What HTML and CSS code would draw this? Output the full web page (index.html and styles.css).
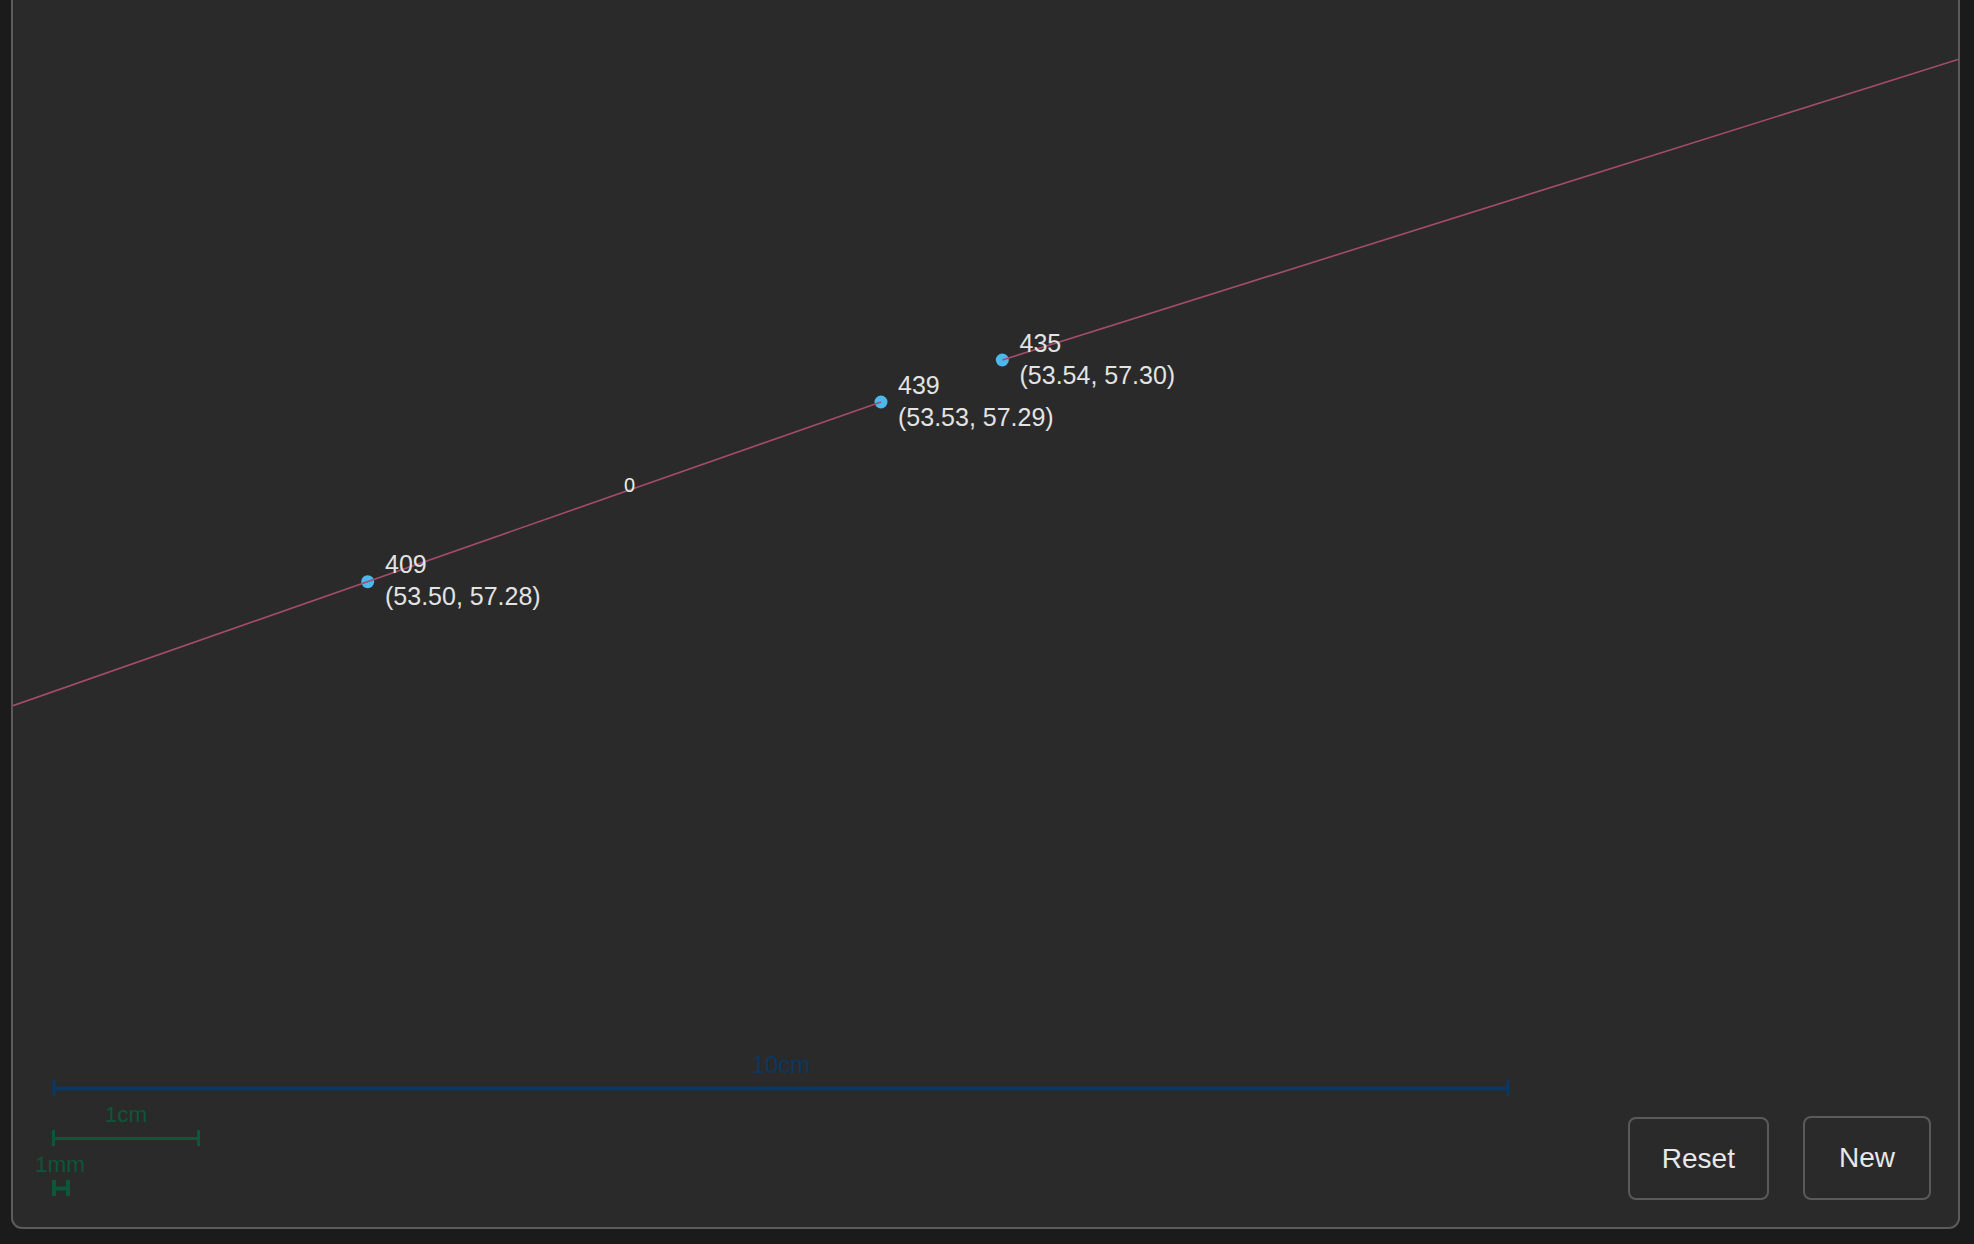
FILE: index.html
```html
<!DOCTYPE html>
<html lang="en">
<head>
<meta charset="utf-8">
<title>Measure</title>
<link rel="stylesheet" href="styles.css">
</head>
<body>
<div class="page">
  <div class="panel">
    <svg class="canvas" viewBox="13 0 1945 1227" xmlns="http://www.w3.org/2000/svg">
      <g class="dots">
        <circle cx="367.7" cy="581.7" r="6.5"/>
        <circle cx="881" cy="402" r="6.5"/>
        <circle cx="1002.3" cy="360" r="6.5"/>
      </g>
      <g class="track">
        <line x1="13" y1="705.7" x2="881" y2="402"/>
        <line x1="1002.3" y1="360" x2="1958" y2="59.5"/>
      </g>
      <g class="labels">
        <text x="385" y="573">409</text>
        <text x="385" y="605">(53.50, 57.28)</text>
        <text x="898" y="394">439</text>
        <text x="898" y="426">(53.53, 57.29)</text>
        <text x="1019.5" y="352">435</text>
        <text x="1019.5" y="384">(53.54, 57.30)</text>
        <text class="seg" x="624" y="492">0</text>
      </g>
      <g class="bar-10cm">
        <line class="bar" x1="52" y1="1088.5" x2="1510" y2="1088.5"/>
        <line class="tick" x1="54" y1="1080" x2="54" y2="1096"/>
        <line class="tick" x1="1508" y1="1080" x2="1508" y2="1096"/>
        <text x="781" y="1073">10cm</text>
      </g>
      <g class="bar-small">
        <line class="bar" x1="52" y1="1138.5" x2="200" y2="1138.5"/>
        <line class="tick" x1="53.5" y1="1130" x2="53.5" y2="1146"/>
        <line class="tick" x1="198.5" y1="1130" x2="198.5" y2="1146"/>
        <text x="126" y="1121.5">1cm</text>
        <line class="bar thick" x1="52" y1="1188.5" x2="70" y2="1188.5"/>
        <line class="tick thick" x1="54" y1="1180" x2="54" y2="1196"/>
        <line class="tick thick" x1="68" y1="1180" x2="68" y2="1196"/>
        <text x="60" y="1171.5">1mm</text>
      </g>
    </svg>
    <div class="controls">
      <button class="btn btn-reset" type="button">Reset</button>
      <button class="btn btn-new" type="button">New</button>
    </div>
  </div>
</div>
</body>
</html>
```
FILE: styles.css
```css
html, body {
  margin: 0;
  padding: 0;
  background: #1b1b1b;
  height: 100%;
  overflow: hidden;
}

.page {
  box-sizing: border-box;
  height: 100vh;
  padding: 0 14px 15px 11px;
  display: flex;
}

.panel {
  position: relative;
  flex: 1;
  box-sizing: border-box;
  background: #2a2a2a;
  border: 2px solid #5b5b5b;
  border-top: none;
  border-radius: 0 0 11px 11px;
}

.canvas {
  position: absolute;
  left: 0;
  top: 0;
  width: 100%;
  height: 100%;
  display: block;
}

.dots circle {
  fill: #4db8ec;
}

.track line {
  stroke: #a44c6c;
  stroke-width: 1.6;
}

.labels text {
  font-family: "Liberation Sans", Arial, sans-serif;
  font-size: 25px;
  fill: #e3e3e3;
}

.labels .seg {
  font-size: 20px;
  fill: #ececec;
}

.bar-10cm line {
  stroke: #0b3761;
}
.bar-10cm .bar { stroke-width: 4; }
.bar-10cm .tick { stroke-width: 3; }
.bar-10cm text {
  font-family: "Liberation Sans", Arial, sans-serif;
  font-size: 24px;
  fill: #0b3761;
  text-anchor: middle;
}

.bar-small line {
  stroke: #0d5638;
}
.bar-small .bar { stroke-width: 3; }
.bar-small .tick { stroke-width: 3; }
.bar-small .thick { stroke-width: 4; }
.bar-small text {
  font-family: "Liberation Sans", Arial, sans-serif;
  font-size: 22.5px;
  fill: #0d5638;
  text-anchor: middle;
}

.controls {
  position: absolute;
  right: 27px;
  bottom: 27px;
  display: flex;
  align-items: flex-end;
  gap: 34px;
}

.btn {
  box-sizing: border-box;
  height: 84px;
  padding: 0 32px;
  background: #2a2a2a;
  color: #e8e8e8;
  border: 2px solid #5a5a5a;
  border-radius: 8px;
  font-family: "Liberation Sans", Arial, sans-serif;
  font-size: 28px;
}

.btn-reset {
  height: 83px;
}

.btn-new {
  padding: 0 34px;
}
```
